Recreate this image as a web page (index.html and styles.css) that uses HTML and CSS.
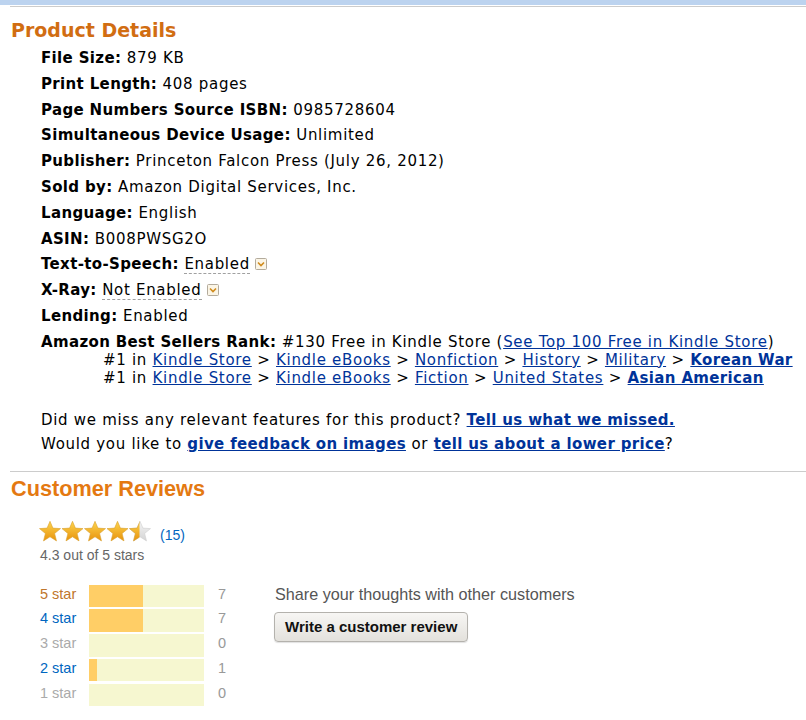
FILE: index.html
```html
<!DOCTYPE html>
<html lang="en">
<head>
    <meta charset="UTF-8">
    <meta name="viewport" content="width=device-width, initial-scale=1.0">
    <title>Product Details</title>
    <link rel="stylesheet" href="styles.css">
</head>
<body>
    <div class="topbar"></div>
    <div class="page">
        <div class="rule"></div>

        <h2 class="details-title">Product Details</h2>
        <ul class="details">
            <li><b>File Size:</b> 879 KB</li>
            <li><b>Print Length:</b> 408 pages</li>
            <li><b>Page Numbers Source ISBN:</b> 0985728604</li>
            <li><b>Simultaneous Device Usage:</b> Unlimited</li>
            <li><b>Publisher:</b> Princeton Falcon Press (July 26, 2012)</li>
            <li><b>Sold by:</b> Amazon Digital Services, Inc.</li>
            <li><b>Language:</b> English</li>
            <li><b>ASIN:</b> B008PWSG2O</li>
            <li><b>Text-to-Speech:</b> <span class="dotted">Enabled</span><span class="popover-btn"><svg width="12" height="12" viewBox="0 0 12 12"><rect x="0.5" y="0.5" width="11" height="11" rx="1" fill="#fbf5e6" stroke="#b3ab9c"/><path d="M3 4.5 L6 7.5 L9 4.5" fill="none" stroke="#d08a1c" stroke-width="1.6"/></svg></span></li>
            <li><b>X-Ray:</b> <span class="dotted">Not Enabled</span><span class="popover-btn"><svg width="12" height="12" viewBox="0 0 12 12"><rect x="0.5" y="0.5" width="11" height="11" rx="1" fill="#fbf5e6" stroke="#b3ab9c"/><path d="M3 4.5 L6 7.5 L9 4.5" fill="none" stroke="#d08a1c" stroke-width="1.6"/></svg></span></li>
            <li><b>Lending:</b> Enabled</li>
            <li class="nowrap"><b>Amazon Best Sellers Rank:</b> #130 Free in Kindle Store (<a href="#">See Top 100 Free in Kindle Store</a>)
                <ul class="ranks">
                    <li>#1 in <a href="#">Kindle Store</a> &gt; <a href="#">Kindle eBooks</a> &gt; <a href="#">Nonfiction</a> &gt; <a href="#">History</a> &gt; <a href="#">Military</a> &gt; <b><a href="#">Korean War</a></b></li>
                    <li>#1 in <a href="#">Kindle Store</a> &gt; <a href="#">Kindle eBooks</a> &gt; <a href="#">Fiction</a> &gt; <a href="#">United States</a> &gt; <b><a href="#">Asian American</a></b></li>
                </ul>
            </li>
        </ul>

        <p class="feedback">
            Did we miss any relevant features for this product? <b><a href="#">Tell us what we missed.</a></b><br>
            Would you like to <b><a href="#">give feedback on images</a></b> or <b><a href="#">tell us about a lower price</a></b>?
        </p>

        <div class="rule"></div>

        <div class="reviews">
            <h2 class="reviews-title">Customer Reviews</h2>

            <div class="rating">
                <svg class="stars" width="113" height="21" viewBox="0 0 113 21">
                    <defs>
                        <linearGradient id="gold" x1="0" y1="0" x2="0" y2="1">
                            <stop offset="0" stop-color="#fdd54e"/>
                            <stop offset="1" stop-color="#e8920c"/>
                        </linearGradient>
                        <linearGradient id="grey" x1="0" y1="0" x2="0" y2="1">
                            <stop offset="0" stop-color="#f4f4f4"/>
                            <stop offset="1" stop-color="#d4d4d4"/>
                        </linearGradient>
                        <path id="star" d="M11 0.3 L13.9 7.1 L21.5 7.6 L15.6 12.5 L17.5 19.9 L11 15.8 L4.5 19.9 L6.4 12.5 L0.5 7.6 L8.1 7.1 Z"/>
                        <clipPath id="half"><rect x="90" y="0" width="10.5" height="21"/></clipPath>
                    </defs>
                    <g stroke="#d9a130" stroke-width="0.6">
                        <use href="#star" x="0" fill="url(#gold)"/>
                        <use href="#star" x="22.5" fill="url(#gold)"/>
                        <use href="#star" x="45" fill="url(#gold)"/>
                        <use href="#star" x="67.5" fill="url(#gold)"/>
                    </g>
                    <use href="#star" x="90" fill="url(#grey)" stroke="#cfcfcf" stroke-width="0.6"/>
                    <g clip-path="url(#half)">
                        <use href="#star" x="90" fill="url(#gold)" stroke="#d9a130" stroke-width="0.6"/>
                    </g>
                </svg>
                <a class="count-link" href="#">(15)</a>
            </div>
            <div class="average">4.3 out of 5 stars</div>

            <div class="summary">
                <div class="histogram">
                    <span class="label five">5 star</span>
                    <div class="bar"><div class="fill" style="width: 46.7%"></div></div>
                    <span class="num">7</span>

                    <span class="label link">4 star</span>
                    <div class="bar"><div class="fill" style="width: 46.7%"></div></div>
                    <span class="num">7</span>

                    <span class="label">3 star</span>
                    <div class="bar"><div class="fill" style="width: 0%"></div></div>
                    <span class="num">0</span>

                    <span class="label link">2 star</span>
                    <div class="bar"><div class="fill" style="width: 6.7%"></div></div>
                    <span class="num">1</span>

                    <span class="label">1 star</span>
                    <div class="bar"><div class="fill" style="width: 0%"></div></div>
                    <span class="num">0</span>
                </div>

                <div class="write">
                    <div class="share">Share your thoughts with other customers</div>
                    <button class="write-btn" type="button">Write a customer review</button>
                </div>
            </div>
        </div>
    </div>
</body>
</html>
```

FILE: styles.css
```css
body {
    margin: 0;
    background: #fff;
    color: #000;
    font-family: "DejaVu Sans", Verdana, sans-serif;
    font-size: 15px;
}

a {
    color: #003399;
}

.topbar {
    height: 5px;
    background-color: #bcd3ef;
}

.page {
    padding-left: 10px;
}

.rule {
    height: 1px;
    margin-top: 1px;
    background-color: #cccccc;
}

.details-title {
    margin: 11px 0 0 1px;
    font-size: 19px;
    line-height: 24px;
    color: #d16d12;
}

.details,
.feedback {
    letter-spacing: 0.7px;
}

.details b,
.feedback b {
    letter-spacing: 0.35px;
}

.details {
    list-style: none;
    margin: 7px 0 0;
    padding-left: 31px;
    line-height: 18px;
}

.details > li {
    margin-bottom: 7.8px;
}

.details > li:last-child {
    margin-bottom: 0;
}

.nowrap {
    white-space: nowrap;
}

.dotted {
    border-bottom: 1px dashed #a0a0a0;
}

.popover-btn {
    display: inline-block;
    margin-left: 5px;
    vertical-align: -1px;
}

.popover-btn svg {
    display: block;
}

.ranks {
    list-style: none;
    margin: 0;
    padding-left: 62px;
}

.feedback {
    margin: 21px 0 0;
    padding-left: 31px;
    line-height: 24px;
}

.feedback + .rule {
    margin-top: 15px;
}

.reviews {
    font-family: "Liberation Sans", Arial, sans-serif;
}

.reviews-title {
    margin: 5px 0 0 1px;
    font-size: 21.7px;
    line-height: 24px;
    color: #e47911;
}

.rating {
    display: flex;
    align-items: flex-end;
    margin: 20px 0 0 29px;
}

.stars {
    display: block;
}

.count-link {
    margin: 0 0 -1px 8px;
    font-size: 14px;
    line-height: 16px;
    color: #0066c0;
    text-decoration: none;
}

.average {
    margin: 5px 0 0 30px;
    font-size: 14px;
    line-height: 16px;
    color: #666;
}

.summary {
    display: flex;
    margin: 22px 0 0 30px;
}

.histogram {
    display: grid;
    grid-template-columns: 49px 115px 70px;
    grid-auto-rows: 22.6px;
    row-gap: 2.1px;
    font-size: 14.5px;
    line-height: 18px;
}

.label {
    color: #aaa;
}

.label.five {
    color: #c0762c;
}

.label.link {
    color: #0066c0;
}

.bar {
    background-color: #f6f7d0;
}

.fill {
    height: 100%;
    background-color: #ffce66;
}

.num {
    padding-left: 14px;
    color: #999;
}

.write {
    padding-left: 1px;
}

.share {
    font-size: 16.2px;
    line-height: 18px;
    color: #555;
}

.write-btn {
    display: block;
    margin: 9px 0 0 -1px;
    height: 30px;
    padding: 0 10px;
    font-family: "Liberation Sans", Arial, sans-serif;
    font-size: 15px;
    font-weight: bold;
    color: #111;
    background: linear-gradient(#f7f6f4, #e3e1dc);
    border: 1px solid #b4b2ad;
    border-radius: 4px;
    box-shadow: 0 1px 1px rgba(0, 0, 0, 0.12);
    cursor: pointer;
}
```
